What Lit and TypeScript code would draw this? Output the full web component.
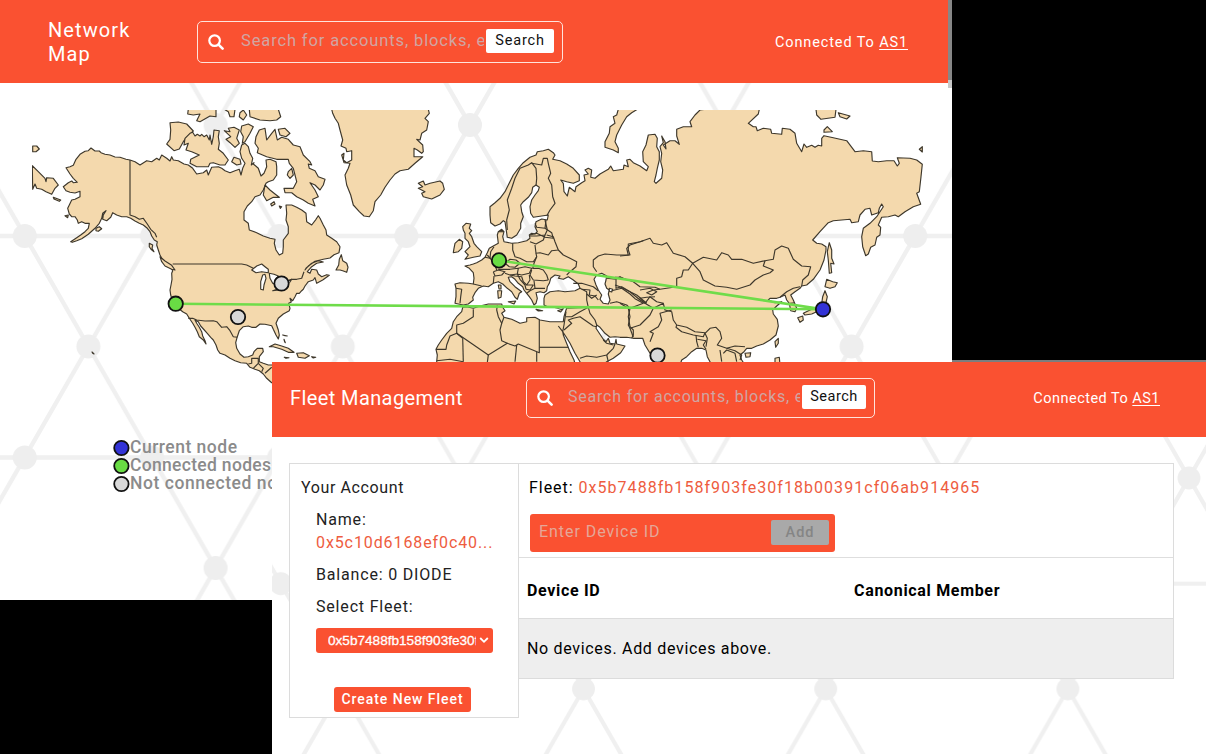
import { LitElement, html, svg, css } from "lit";
import { customElement, property } from "lit/decorators.js";

// Survey sheets of the map: each has its own origin, with three units to a pixel.
type Sheet = [number, number, string];
const A = (s: string): Sheet => [20, 100, s];
const B = (s: string): Sheet => [160, 100, s];
const C = (s: string): Sheet => [150, 240, s];
const D = (s: string): Sheet => [400, 100, s];
const E = (s: string): Sheet => [430, 220, s];
const F = (s: string): Sheet => [620, 220, s];
const G = (s: string): Sheet => [620, 100, s];

const trace = (parts: Sheet[]) =>
  "M" +
  parts
    .map(([ox, oy, s]) =>
      s
        .trim()
        .split(/\s+/)
        .map((p) => {
          const [x, y] = p.split(",").map(Number);
          return (ox + x / 3).toFixed(1) + " " + (oy + y / 3).toFixed(1);
        })
        .join("L")
    )
    .join("L");

const AMERICA = [
  A("330,180 318,178 300,172 285,171 270,165 255,163 243,158 238,153 225,153 213,144 205,152 195,154 180,163 168,178 160,196 150,200 138,203 150,222 160,235 172,247 160,248 155,243 145,248 130,260 138,272 150,277 165,279 180,274 180,290 165,298 155,300 148,315 143,325 148,342 155,350 165,350 172,360 175,370 185,365 195,370 208,370 205,385 195,395 182,405 170,413 152,425 157,427 170,422 185,416 205,403 225,385 238,370 245,355 248,340 258,332 250,345 248,358 260,362 272,352 278,338 290,345 305,350 320,350 332,355 345,363 358,370 370,375 382,385 390,395 395,408 403,420 412,425 410,435 415,450 420,465 425,475"),
  C("35,55 45,68 60,80 68,92 65,100 66,118 63,135 60,150 62,165 68,185 85,205 98,215 110,222 118,235 128,250 135,262 142,275 148,290 160,300 168,312 165,302 158,288 155,275 148,262 140,250 135,240 145,245 152,258 163,270 172,280 182,292 190,300 198,315 203,330 210,340 225,345 240,355 255,362 272,368 290,370 300,382 315,388 328,392 340,402 350,415 365,428 400,440 400,370 385,372 370,375 355,375 340,370 328,365 328,350 340,335 338,325 322,325 312,335 308,345 295,350 282,352 270,342 260,325 257,308 262,290 268,272 280,260 295,258 305,262 318,262 330,252 345,253 365,257 370,268 378,285 385,297 388,285 385,270 378,250 385,235 400,222 418,212 420,205 416,190 424,186 420,175 428,182 435,170 440,160 448,160 455,152 460,148 465,138 475,125 490,120 495,113 500,130 518,120 538,106 530,104 515,110 505,102 500,90 485,88 480,100 472,95 485,80 500,70 520,66 505,62 485,70 468,85 465,90 475,78 495,64 520,58 540,54 552,44 567,38"),
  B("540,440 530,425 515,415 500,405 498,390 490,375 480,355 475,347 468,358 455,375 440,365 438,340 425,330 410,322 395,315 378,315 380,340 378,360 385,380 385,400 370,420 370,440 368,460 358,465 348,450 343,430 345,418 330,415 310,408 290,398 268,390 265,370 252,360 252,335 262,318 275,305 285,290 300,285 310,270 318,250 325,245 340,240 350,225 350,200 348,185 330,178 318,180 320,200 312,220 303,228 295,205 280,192 282,188 274,195 278,175 270,160 265,140 255,130 245,135 240,155 245,175 255,190 248,205 243,225 238,208 225,212 210,218 195,212 185,205 175,200 155,202 145,225 140,210 130,218 110,222 98,205 85,195 72,192 55,182 40,180 35,170 30,183 20,175 5,165"),
  A("418,180 410,175 395,185 380,182 360,195 345,185"),
];

const EURASIA = [
  D("445,345 400,352 392,340 390,320 395,300 405,285 415,272 418,262 408,255 398,262 395,278 385,292 370,305 362,315 365,335 370,350 362,370 362,385 350,405 335,415 322,412 318,385 315,365 310,362 300,372 285,378 272,368 270,345 270,320 285,308 300,295 315,275 325,255 340,225 355,205 370,188 390,172 408,165 412,155 430,152 445,148 460,158 465,165 458,178 480,182 500,192 520,205 538,225 538,242 520,250 500,245 482,240 490,250 492,275 502,288 508,262 525,275 528,260 545,248 555,242 552,225 565,222 555,210 565,205 575,210 572,232 585,235 600,222 625,208 632,198 640,212 670,208 672,195 685,200 680,180 690,178 700,188 720,198"),
  G("80,212 85,200 70,185 68,155 78,135 85,105 105,103 112,115 110,140 118,155 118,180 112,205 108,225 103,245 108,250 125,235 128,210 122,185 125,160 120,140 130,128 125,108 135,125 138,147 130,135 150,122 165,122 178,133 170,108 170,88 190,80 215,80 210,65 225,45 240,30 255,28 418,28 415,42 385,70 400,80 408,80 412,92 430,85 452,88 455,100 485,103 487,85 510,88 525,100 530,130 545,155 552,132 560,142 575,136 585,142 595,136 605,138 605,115 612,107 640,113 680,122 705,155 730,152 755,155 757,183 775,185 800,182 822,182 832,198 838,190 832,173 870,175 890,180 907,193 903,230 898,275 890,280 902,313 880,320 855,335 835,350 825,345 805,350 785,352 775,375 782,382 780,405 770,412 765,435 752,442 745,462 737,467 728,440 725,410 730,385 750,370 770,350 790,320 785,312 778,325 775,338 755,345 750,325 735,328 720,345 715,365 695,368 690,358 640,362 625,368 600,395 578,420 590,430 605,432 618,440"),
  F("618,90 612,120 600,150 580,178 560,195 545,198 540,205 525,215 512,225 520,240 530,265 525,275 512,272 508,250 500,240 495,225 480,232 470,235 450,235 445,240 465,248 485,245 470,258 458,270 460,282 472,298 475,318 468,345 450,360 430,372 410,378 395,385 380,385 372,395 360,405 365,420 375,435 275,435 270,425 262,410 258,390 245,385 230,385 215,395 200,410 185,420 180,435 110,435 90,400 75,375 68,355 40,355 20,352 0,352"),
  E("555,350 540,352 525,340 510,322 500,315 498,325 508,340 520,358 528,365 535,355 540,370 555,372 558,358 560,372 585,378 572,398 550,415 530,425 520,435 455,435 450,425 435,400 420,370 408,350 398,335 400,345 408,365 420,395 432,420 436,435 20,435 20,425 22,405 18,388 25,375 35,360 50,340 65,325 70,305 80,290 95,275 98,262 110,260 130,265 150,258 175,252 200,252 215,252 218,262 225,272 215,280 222,292 245,298 270,310 290,305 290,293 315,292 330,300 360,305 385,305 400,305 402,290 408,270 412,262 400,262 385,265 370,262 355,262 342,255 342,235 345,225 360,215 385,212 405,215 435,212 450,205 445,192 430,180 415,170 400,178 385,175 390,168 375,165 362,175 358,190 352,200 350,212 342,218 330,215 318,218 322,235 318,250 312,255 305,240 298,230 290,220 282,210 278,200 265,190 255,178 245,170 235,172 240,185 255,200 275,215 268,220 262,238 255,232 245,215 232,205 218,192 205,185 190,190 175,200 160,198 145,205 135,218 128,232 130,240 115,252 100,255 85,252 75,250 78,230 78,205 75,192 90,188 115,190 130,192 132,175 130,158 118,145 105,138 120,135 130,132 140,128 155,120 165,112 172,98 178,85 190,78 205,70 202,45 205,35 215,28 222,35 218,50 222,65 245,70 265,68 290,62 300,55 298,45 305,40 315,42 322,35 315,20 318,5 335,-3 352,0"),
];

const CASPIAN = E("500,165 515,160 530,168 528,180 525,192 530,205 538,210 535,222 540,240 535,252 520,250 510,238 515,225 505,210 498,195 492,178");

const GREENLAND = [
  B("515,28 518,40 525,55 535,70 540,90 548,120 543,138 558,145 560,155 575,152 575,180 560,188 550,180 552,160 545,165 552,188 570,190 565,205 555,225 560,255 572,285 580,315 598,335 612,348 628,350 640,332 645,305 662,285 675,262 690,240 705,222 720,212"),
  D("25,208 45,190 68,170 42,170 42,145 52,150 65,160 70,155 68,135 50,118 60,120 65,100 80,90 85,65 75,55 88,40 85,28"),
];

const ISLANDS: Sheet[] = [
  A("37,197 55,215 75,235 78,245 80,233 100,235 115,255 105,265 95,283 78,275 65,268 50,265 45,252 38,268"),
  A("38,138 50,138 58,147 48,155 38,155"),
  A("100,292 122,300 118,304 102,297"),
  A("135,347 145,345 143,353"),
  A("228,385 238,380 245,386 235,394 228,392"),
  A("388,430 398,435 396,445 402,455 393,448 388,440"),
  A("450,68 475,66 500,72 520,93 500,112 490,125 478,147 462,152 440,132 450,118 452,90"),
  B("98,97 105,108 112,103 120,108 125,103 132,110 140,105 148,120 150,105 155,133 160,110 162,90 178,92 175,110 178,130 175,148 190,160 205,180 195,195 180,195 160,188 150,190 145,200 110,200 90,190 92,178 118,165 95,155 78,150 85,130 72,135 75,115 90,100"),
  B("85,28 83,42 100,45 120,42 110,62 120,65 150,48 168,50 168,28"),
  B("193,28 205,35 210,50 222,50 225,28"),
  B("240,38 250,30 260,45 250,60 238,50"),
  B("268,28 270,50 300,60 330,62 350,60 362,50 355,28"),
  B("193,92 210,95 205,85 222,82 238,90 230,115 238,130 225,142 210,128 198,118 212,110"),
  B("245,78 265,72 280,80 270,100 255,125 247,130 250,110 242,95"),
  B("222,172 240,178 243,192 230,195 215,185"),
  B("288,110 298,90 315,85 320,120 335,100 345,88 352,120 365,112 385,118 400,135 420,140 430,165 450,185 455,195 445,192 448,205 465,212 475,230 495,238 490,255 480,270 465,255 450,248 465,270 475,290 458,298 465,318 445,310 430,300 410,290 395,278 375,278 372,265 400,265 410,245 405,225 400,205 388,190 385,178 350,178 320,170 292,158 295,145 285,130"),
  B("355,88 375,85 390,100 378,110 360,105"),
  B("385,215 395,205 400,225 390,235 382,225"),
  B("315,255 330,270 345,282 358,292 340,292 320,302 310,285"),
  B("332,312 342,305 345,312 335,318"),
  B("358,318 365,320 361,325"),
  C("30,50 45,63 65,76 75,90 65,88 45,78 35,65"),
  C("558,90 566,75 568,58 574,44 578,62 590,70 594,82 590,97 578,92 570,90"),
  C("358,320 375,312 395,318 415,325 432,337 415,337 395,328 370,320"),
  C("440,340 460,338 478,347 465,355 445,352"),
  C("485,350 497,352 490,354"),
  C("403,352 417,353 408,355"),
  C("398,285 412,288 405,287"),
  C("402,298 406,308 404,306"),
  D("55,250 70,243 75,255 90,250 120,243 128,250 133,268 120,285 95,297 70,290 65,280 75,275 55,265 68,260"),
  D("655,28 650,45 640,50 645,70 630,80 628,100 615,125 615,142 640,150 655,158 655,145 645,125 650,105 665,75 680,50 695,38 712,28"),
  G("588,28 590,45 603,58 645,52 648,28"),
  G("655,38 690,48 680,57 660,50"),
  G("612,90 622,80 637,95 612,97"),
  G("898,148 907,140 907,156"),
  E("98,20 108,10 122,12 118,25 125,32 118,40 125,50 132,70 140,80 155,95 150,108 130,112 105,118 115,105 105,95 120,80 115,65 105,55 105,40 100,30"),
  E("75,70 88,58 98,65 95,85 85,95 70,98 72,85"),
  E("205,195 213,195 213,207 207,207"),
  E("203,212 215,212 213,232 205,235"),
  E("235,245 257,243 252,252"),
  E("318,268 338,272 325,273"),
  E("383,272 400,266 392,276"),
  F("628,68 635,90 635,115 642,132 632,130 635,158 628,160 625,120 622,95"),
  F("620,178 638,185 652,188 645,200 630,205 615,200"),
  F("615,212 622,230 618,248 605,265 590,275 575,282 555,285 550,280 570,270 590,262 605,250 608,230"),
  F("533,293 548,288 550,300 540,307"),
  F("465,365 475,355 475,370 467,382"),
  F("375,400 392,398 390,410 378,412"),
  F("465,415 478,412 480,435 465,435"),
  [0, 0, "276,1056 282,1062 278,1060"],
];

const LAKES: Sheet[] = [
  C("305,90 320,78 335,72 345,80 355,88 355,98 335,95 318,98"),
  C("338,105 345,103 348,115 342,135 340,150 332,148 332,125"),
  C("358,100 372,103 385,108 375,120 378,135 368,130 360,115"),
  C("368,152 385,146 400,142 388,150"),
  C("402,130 425,118 420,126"),
  E("538,205 548,208 545,216 538,214"),
];

const BORDERS: Sheet[] = [
  A("330,180 330,345 345,350 358,358 370,355 382,372 392,388 405,400 410,412"),
  C("68,72 275,72 290,75 310,85"),
  C("405,125 425,118 440,118 455,115 462,95"),
  C("115,235 128,235 140,240 165,243 190,242 200,245 215,262 230,260 240,272 250,290 262,292"),
  C("295,372 305,370 305,355 325,355 325,370 310,385"),
  C("325,370 340,385 335,395"),
  C("345,400 365,382"),
  D("322,390 320,360 328,330 322,300 335,265 345,235 360,205 385,195 395,188 408,205 410,235 408,258"),
  D("395,190 425,195 430,175 442,175 445,190 452,220 445,235 455,255 458,290 465,310 450,330 440,348"),
  D("405,370 410,382 435,385 438,360"),
  D("390,405 410,400 435,412 460,415 455,398 435,385"),
  E("300,48 320,48 345,45 352,30 345,0"),
  E("345,45 340,60 318,72 300,65"),
  E("350,45 370,50 375,65 385,90 365,92 355,105 330,98 318,100 315,75"),
  E("248,70 248,90 255,110 270,115 290,125 310,125 320,110 318,100"),
  E("385,90 400,105 420,115 440,125 438,140 420,155 410,165"),
  E("320,110 312,130 308,145 325,145 340,150 350,165 355,180"),
  E("305,150 300,165 310,180 340,182 355,180"),
  E("312,182 315,205 345,205"),
  E("172,105 185,120 195,135 200,150"),
  E("190,155 205,150 225,155 215,165 195,168 190,155"),
  E("205,148 240,148 265,145 262,162 240,165 225,160"),
  E("225,130 240,118 258,120 270,130 255,142 238,140 225,130"),
  E("265,145 285,140 305,145 298,160 275,165 262,162 270,178 285,195 288,208"),
  E("240,165 255,168 275,170 280,185 290,195 300,180 298,165"),
  E("290,195 310,195 300,210 288,208"),
  E("315,205 300,212 290,220"),
  E("192,168 190,190"),
  E("130,192 155,198"),
  E("78,205 95,208 92,230 90,250"),
  E("165,112 180,115 182,95 192,80"),
  E("205,35 222,35"),
  E("450,205 470,215 470,240 475,262 412,265"),
  E("430,190 455,190 490,200 505,212"),
  E("455,208 480,210 478,225 495,228 505,240"),
  E("470,222 485,235 500,225"),
  E("475,262 480,280 495,300 500,315"),
  E("408,290 425,290 450,275 475,262"),
  E("402,330 425,310 415,300 430,295 450,290 490,318 500,320"),
  E("385,318 398,335 402,315 408,275"),
  E("450,415 470,408 500,412 530,405 550,385 555,372"),
  E("530,405 535,425"),
  E("520,360 530,370 550,375"),
  E("540,250 560,245 590,255 600,265 595,290 600,320 610,330 610,345 605,355"),
  E("328,300 328,398 265,372 255,378 232,370 175,405 80,340"),
  E("328,382 415,382"),
  E("98,355 100,425"),
  E("98,355 80,340 60,348 55,362 50,375 48,388 18,388"),
  E("80,340 80,315 100,310 130,290 130,268"),
  E("232,370 215,362 210,330 215,310 205,290 200,270 202,255"),
  E("215,310 222,292"),
  E("175,405 172,428"),
  E("260,375 255,425"),
  E("320,396 320,425"),
  E("20,422 60,418 100,425"),
  E("500,155 490,140 490,120 505,108 525,102 560,105 595,105 590,85 600,75 640,62"),
  F("0,108 30,105 25,90 25,72 60,65 90,55 100,70 125,75 140,68 160,100 195,110 218,130 205,150 190,150 185,170 170,175 170,200 120,208 105,202 60,200 40,185 0,172 -15,172"),
  E("530,175 558,178 558,205 575,200 600,215 620,225 650,250"),
  E("558,178 570,170 585,178"),
  E("545,212 575,205 600,222 615,236 640,250 600,265"),
  F("-15,195 0,200 30,215 60,240 75,250 90,230 110,245 130,250"),
  F("60,210 90,205 110,215 95,225 80,218 100,210 120,208"),
  F("75,250 60,235 80,232 105,230"),
  F("0,250 25,265 30,290 25,315 30,325 60,315 75,300 90,285 100,265 75,250"),
  F("40,352 30,325"),
  F("90,365 100,340 90,335 115,320 125,300 120,280 155,270"),
  F("100,265 130,250 135,270 155,275 160,300 170,315 200,322 225,335 255,338 250,350 220,345 185,335 168,322 170,315"),
  F("228,345 230,365 235,382"),
  F("232,358 258,362 250,375 258,388"),
  F("255,340 270,325 288,322 300,335 305,355 292,375 320,385 345,378 375,380"),
  F("255,340 262,355 258,380"),
  F("300,390 305,425"),
  F("310,400 320,390 345,400 350,425"),
  F("320,385 345,392 365,405 360,420"),
  F("218,130 250,112 290,120 305,98 325,105 335,118 365,118 400,130 435,122 460,118 465,90 485,78 505,85 520,118 545,138 572,140 565,165 548,180 545,198"),
  F("435,122 430,138 460,150 450,158 430,165 405,180 390,195 350,208 320,202 285,198 250,180 240,155 218,130"),
  F("480,232 500,215 520,205 540,200"),
  F("510,250 525,248"),
];

const NODES: [number, number, string][] = [
  [281.5, 283.5, "#d8d8d8"],
  [238, 317, "#d8d8d8"],
  [657.5, 355.5, "#d8d8d8"],
  [175.7, 303.7, "#69dc44"],
  [499, 260.4, "#69dc44"],
  [823, 309.3, "#3333d6"],
];

const LEGEND: [number, string, string, number][] = [
  [448, "#3333d6", "Current node", 107],
  [466, "#69dc44", "Connected nodes", 141],
  [484, "#d8d8d8", "Not connected nodes", 177],
];

@customElement("mesh-backdrop")
class MeshBackdrop extends LitElement {
  @property() at = "";
  static styles = css`
    :host {
      position: absolute;
      inset: 0;
      z-index: 0;
    }
    svg {
      display: block;
      width: 100%;
      height: 100%;
    }
  `;
  render() {
    return html`<svg>
      <defs>
        <pattern id="mesh" width="254.4" height="443" patternUnits="userSpaceOnUse" patternTransform=${this.at}>
          <g stroke="#f0f0f0" stroke-width="4.4" fill="none">
            <path d="M0 0L127.2 221.5L254.4 443M254.4 0L127.2 221.5L0 443M0 111H254.4M0 332.5H254.4" />
          </g>
          <g fill="#eeeeee">
            <circle cx="0" cy="0" r="12" /><circle cx="254.4" cy="0" r="12" />
            <circle cx="0" cy="443" r="12" /><circle cx="254.4" cy="443" r="12" />
            <circle cx="63.6" cy="111" r="12" /><circle cx="190.8" cy="111" r="12" />
            <circle cx="127.2" cy="221.5" r="12" />
            <circle cx="63.6" cy="332.5" r="12" /><circle cx="190.8" cy="332.5" r="12" />
          </g>
        </pattern>
      </defs>
      <rect width="100%" height="100%" fill="url(#mesh)" />
    </svg>`;
  }
}

@customElement("search-box")
class SearchBox extends LitElement {
  static styles = css`
    :host {
      display: flex;
      align-items: center;
      box-sizing: border-box;
      border: 1px solid #ffe3dc;
      border-radius: 5px;
      padding: 0 8px 0 10px;
      font-family: Roboto, "Liberation Sans", sans-serif;
    }
    svg {
      flex: none;
      width: 16px;
      height: 16px;
    }
    .hint {
      flex: 1;
      margin-left: var(--hint-gap, 17px);
      margin-right: 2px;
      overflow: hidden;
      white-space: nowrap;
      font-size: var(--hint-size, 16.5px);
      line-height: 24px;
      letter-spacing: var(--hint-track, 0.87px);
      color: #d0a5a2;
      margin-bottom: 2px;
    }
    .go {
      flex: none;
      box-sizing: border-box;
      width: var(--go-w, 68px);
      height: 24px;
      border: 0;
      border-radius: 2px;
      background: #fff;
      color: #111;
      font: 14.5px/24px Roboto, "Liberation Sans", sans-serif;
      letter-spacing: var(--go-track, 0.85px);
      padding: 0;
      text-align: center;
      margin-bottom: 1px;
    }
  `;
  render() {
    return html`
      <svg viewBox="0 0 16 16" fill="none" stroke="#fff" stroke-linecap="round">
        <circle cx="6.6" cy="6.6" r="5.3" stroke-width="2.2" />
        <path d="M10.8 10.8L14.6 14.6" stroke-width="2.6" />
      </svg>
      <div class="hint">Search for accounts, blocks, etc.</div>
      <button class="go">Search</button>
    `;
  }
}

@customElement("network-map")
class NetworkMap extends LitElement {
  static styles = css`
    :host {
      display: block;
    }
    svg {
      display: block;
      font-family: Roboto, "Liberation Sans", sans-serif;
    }
    .land {
      fill: #f4d9ad;
      fill-rule: evenodd;
    }
    .lake {
      fill: #fdfdfd;
    }
    .line {
      fill: none;
    }
    .key {
      font-size: 17.5px;
      font-weight: 500;
      fill: #8b8b8b;
    }
  `;
  render() {
    const eurasia = trace(EURASIA) + "Z" + trace([CASPIAN]) + "Z";
    return html`<svg width="952" height="517" viewBox="0 83 952 517">
      <defs>
        <clipPath id="frame"><rect x="32" y="110" width="891" height="300" /></clipPath>
      </defs>
      <g clip-path="url(#frame)" stroke="#3d372b" stroke-width="1.15" stroke-linejoin="round">
        <path class="land" d=${trace(AMERICA) + "Z"} />
        <path class="land" d=${trace(GREENLAND) + "Z"} />
        <path class="land" d=${eurasia} />
        ${ISLANDS.map((i) => svg`<path class="land" d=${trace([i]) + "Z"} />`)}
        ${LAKES.map((l) => svg`<path class="lake" d=${trace([l]) + "Z"} />`)}
        ${BORDERS.map((b) => svg`<path class="line" d=${trace([b])} />`)}
      </g>
      <path d="M176 303.8L823 309.3M499 260.4L823 309.3" stroke="#6fdc4a" stroke-width="2.6" />
      ${NODES.map(([x, y, c]) => svg`<circle cx=${x} cy=${y} r="7.2" fill=${c} stroke="#111" stroke-width="1.8" />`)}
      ${LEGEND.map(
        ([y, c, label, w]) => svg`<circle cx="121.4" cy=${y} r="7.2" fill=${c} stroke="#111" stroke-width="1.8" />
          <text class="key" x="130" y=${y + 5.2} textLength=${w}>${label}</text>`
      )}
    </svg>`;
  }
}

@customElement("app-root")
class AppRoot extends LitElement {
  static styles = css`
    :host {
      display: block;
      position: relative;
      width: 1206px;
      height: 754px;
      overflow: hidden;
      background: #000;
      font-family: Roboto, "Liberation Sans", sans-serif;
      color: #222;
    }
    .win {
      position: absolute;
      overflow: hidden;
      background: #fff;
    }
    .one {
      left: 0;
      top: 0;
      width: 952px;
      height: 600px;
    }
    .two {
      left: 272px;
      top: 362px;
      width: 934px;
      height: 392px;
    }
    .rim {
      position: absolute;
      left: 952px;
      top: 360px;
      width: 254px;
      height: 2px;
      background: #7d7d7d;
    }
    .scroll {
      position: absolute;
      right: 0;
      top: 0;
      width: 4px;
      height: 80px;
      background: #878787;
      border-bottom: 8px solid #c9c9c9;
    }
    .bar {
      position: relative;
      display: flex;
      align-items: center;
      box-sizing: border-box;
      background: #fa5131;
      color: #fff;
    }
    .one .bar {
      width: 948px;
      height: 83px;
      padding: 0 40px 0 48px;
    }
    .two .bar {
      height: 75px;
      padding: 0 46px 0 18px;
    }
    .title {
      font-size: 20px;
      line-height: 24px;
    }
    .one .title {
      width: 149px;
      letter-spacing: 1.1px;
    }
    .two .title {
      width: 236px;
      letter-spacing: 0.4px;
      margin-top: -3px;
    }
    .one search-box {
      width: 366px;
      height: 42px;
    }
    .two search-box {
      width: 349px;
      height: 40px;
      margin-top: -4px;
      --hint-size: 16px;
      --hint-track: 0.79px;
      --hint-gap: 15px;
      --go-w: 64px;
      --go-track: 0.5px;
    }
    .status {
      margin-left: auto;
      font-size: 14.5px;
      letter-spacing: 0.48px;
      white-space: nowrap;
    }
    .one .status {
      letter-spacing: 0.88px;
      margin-top: 1px;
    }
    .two .status {
      margin-top: -3px;
    }
    .status u {
      text-underline-offset: 2px;
    }
    network-map {
      position: relative;
    }
    .fleet {
      position: relative;
      display: flex;
      align-items: flex-start;
      margin: 25.5px 0 0 17px;
      width: 885px;
      font-size: 16px;
      white-space: nowrap;
    }
    .side {
      box-sizing: border-box;
      width: 230px;
      height: 255px;
      border: 1px solid #dcdcdc;
      background: #fff;
      padding: 12.5px 25px 0 26px;
      line-height: 23px;
      letter-spacing: 0.82px;
      display: flex;
      flex-direction: column;
    }
    .side h3 {
      margin: 0 0 9px -15px;
      font-size: 16px;
      font-weight: 400;
      letter-spacing: 0.62px;
    }
    .link {
      color: #ee5c3e;
      letter-spacing: 1.05px;
    }
    .side .link {
      letter-spacing: 0.9px;
    }
    .gap {
      margin-top: 9px;
    }
    .pick {
      display: flex;
      align-items: center;
      box-sizing: border-box;
      width: 177px;
      height: 25px;
      margin-top: 9.5px;
      padding: 0 4px 0 12px;
      border-radius: 3px;
      background: #fa5131;
      color: #fff;
      font: 13.6px/25px "Liberation Sans", Arial, sans-serif;
      letter-spacing: 0;
      -webkit-text-stroke: 0.3px #fff;
    }
    .pick span {
      flex: 1;
      overflow: hidden;
    }
    .pick svg {
      flex: none;
      margin-left: 3px;
    }
    .new {
      align-self: center;
      width: 137px;
      height: 25px;
      margin: 34.5px 0 0 -4px;
      border: 0;
      padding: 0;
      border-radius: 3px;
      background: #fa5131;
      color: #fff;
      font: 500 14px/25px Roboto, "Liberation Sans", sans-serif;
      letter-spacing: 0.95px;
    }
    .main {
      flex: 1;
      box-sizing: border-box;
      border: 1px solid #dcdcdc;
      border-left: 0;
      height: 216px;
      background: #fff;
      color: #000;
      letter-spacing: 0.68px;
    }
    .top {
      height: 94px;
      box-sizing: border-box;
      padding: 12.5px 0 0 10px;
      line-height: 23px;
      border-bottom: 1.5px solid #dedede;
    }
    .lead {
      letter-spacing: 0.95px;
    }
    .add {
      display: flex;
      align-items: center;
      justify-content: space-between;
      box-sizing: border-box;
      width: 305px;
      height: 38px;
      margin: 14.5px 0 0 1px;
      padding: 0 6px 1px 9px;
      border-radius: 3px;
      background: #fa5131;
      color: #e5a798;
      letter-spacing: 0.95px;
    }
    .add span {
      margin-bottom: 2px;
    }
    .add b {
      width: 58px;
      height: 25px;
      border-radius: 2px;
      background: #a9a9a9;
      color: #858585;
      font: 500 14.5px/26px Roboto, "Liberation Sans", sans-serif;
      text-align: center;
    }
    .cols {
      display: grid;
      grid-template-columns: 327px 1fr;
      height: 60px;
      padding-left: 8px;
      line-height: 65px;
      font-weight: 700;
    }
    .none {
      height: 60px;
      box-sizing: border-box;
      padding-left: 8px;
      line-height: 60px;
      border-top: 1px solid #dcdcdc;
      background: #eeeeee;
    }
  `;
  render() {
    return html`
      <section class="win one">
        <mesh-backdrop at="translate(215.6 125)"></mesh-backdrop>
        <header class="bar">
          <div class="title">Network<br />Map</div>
          <search-box></search-box>
          <div class="status">Connected To <u>AS1</u></div>
        </header>
        <network-map></network-map>
        <div class="scroll"></div>
      </section>
      <div class="rim"></div>
      <section class="win two">
        <mesh-backdrop at="translate(917 116) scale(.952)"></mesh-backdrop>
        <header class="bar">
          <div class="title">Fleet Management</div>
          <search-box></search-box>
          <div class="status">Connected To <u>AS1</u></div>
        </header>
        <div class="fleet">
          <div class="side">
            <h3>Your Account</h3>
            <div>Name:</div>
            <div class="link">0x5c10d6168ef0c40...</div>
            <div class="gap">Balance: 0 DIODE</div>
            <div class="gap">Select Fleet:</div>
            <div class="pick">
              <span>0x5b7488fb158f903fe30f18b</span>
              <svg width="10" height="8" viewBox="0 0 10 8" fill="none" stroke="#fff" stroke-width="1.8">
                <path d="M1.2 2L5 5.8L8.8 2" />
              </svg>
            </div>
            <button class="new">Create New Fleet</button>
          </div>
          <div class="main">
            <div class="top">
              <div class="lead">Fleet: <span class="link">0x5b7488fb158f903fe30f18b00391cf06ab914965</span></div>
              <div class="add"><span>Enter Device ID</span><b>Add</b></div>
            </div>
            <div class="cols"><span>Device ID</span><span>Canonical Member</span></div>
            <div class="none">No devices. Add devices above.</div>
          </div>
        </div>
      </section>
    `;
  }
}
